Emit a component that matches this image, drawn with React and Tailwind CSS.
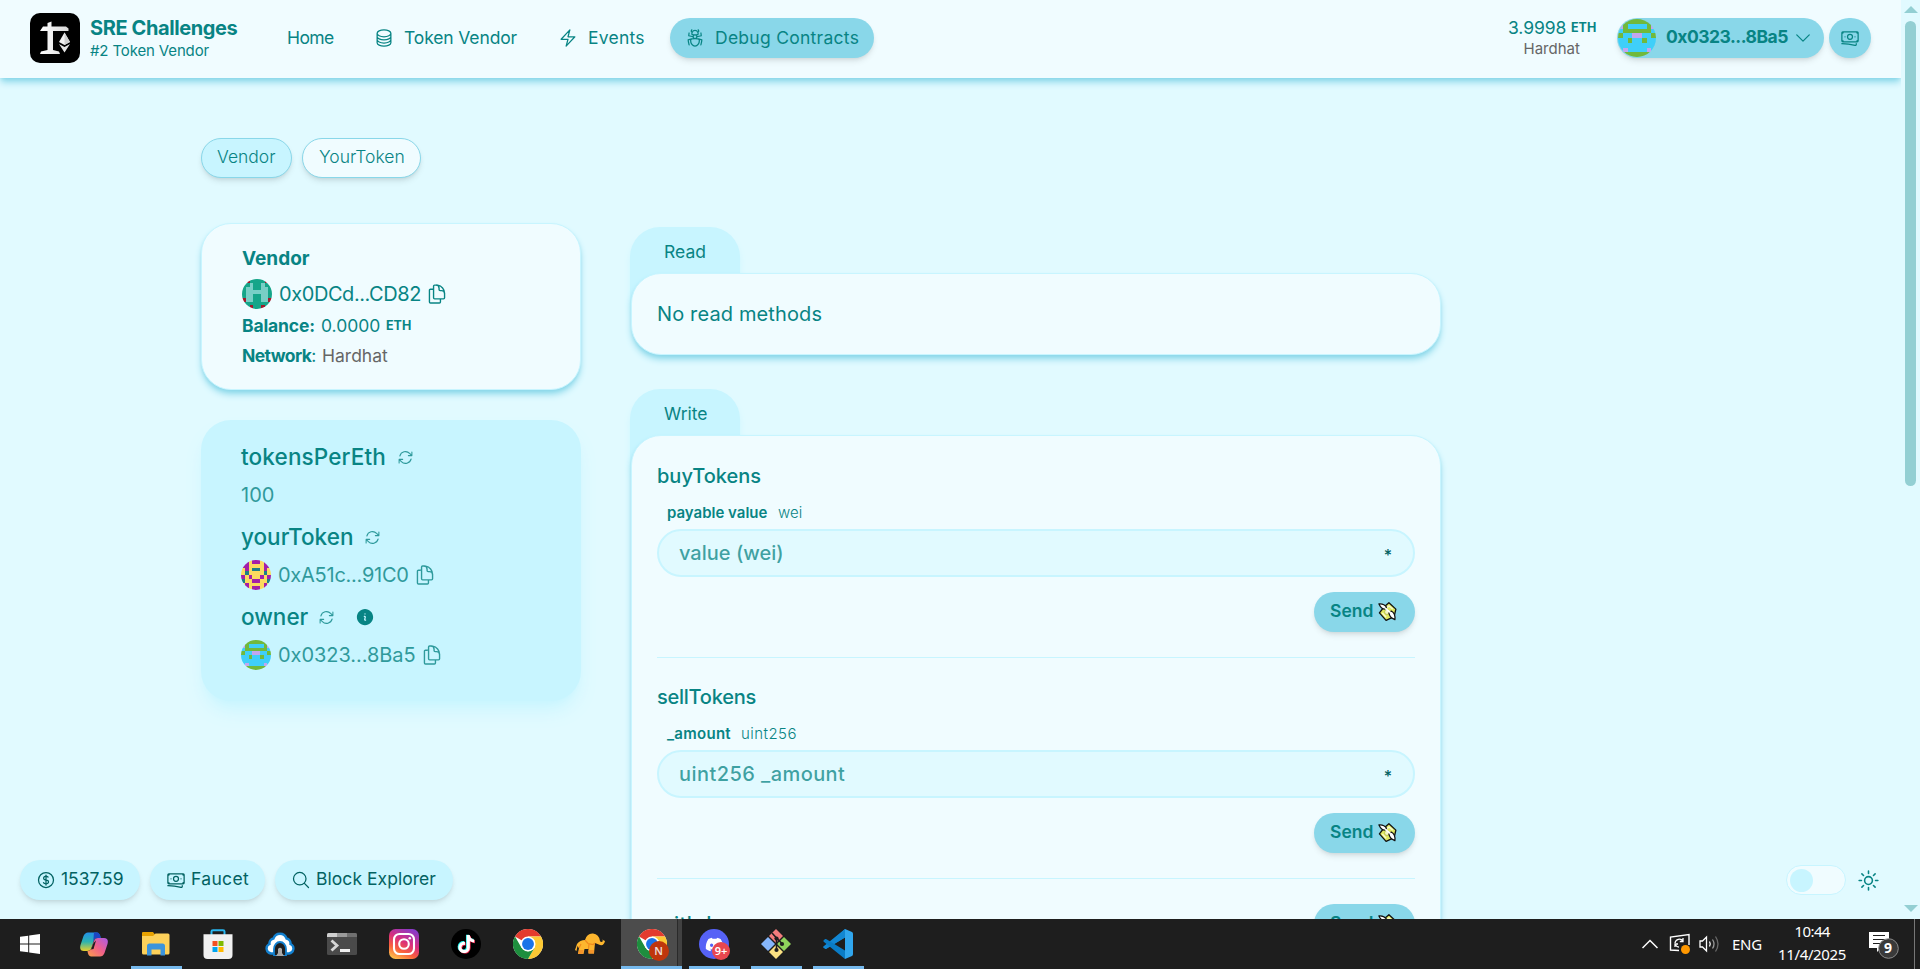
import React from "react";
import {
  HiOutlineCircleStack, HiOutlineBolt, HiOutlineBugAnt, HiOutlineBanknotes, HiOutlineChevronDown,
  HiOutlineDocumentDuplicate, HiOutlineArrowPath, HiInformationCircle, HiOutlineCurrencyDollar,
  HiOutlineMagnifyingGlass, HiOutlineSun,
} from "react-icons/hi2";
import { FaDiscord, FaTiktok } from "react-icons/fa6";

const T = ({ className, children }) => (
  <span className={"block shrink-0 whitespace-nowrap " + className}>{children}</span>
);

const OWNER = {
  colors: { g: "#71b93c", b: "#3fcff9", p: "#c3a6ee" },
  rows: ["gggg", "pgbb", "bggg", "gbbp", "bbgb", "bbbb", "bpbb", "gggg"],
};
const VENDOR = {
  colors: { t: "#15a589", l: "#78cfc6", r: "#a11b2c" },
  rows: ["trtt", "ttlt", "tllt", "tlll", "tllt", "rllt", "tttt", "ttrt"],
};
const TOKEN = {
  colors: { y: "#fbda5f", p: "#a31fa8", t: "#1b7f88" },
  rows: ["ypyp", "ppyy", "ypyt", "ytyy", "pypy", "tyyp", "ypyy", "ppyp"],
};

function Blockie({ data, className }) {
  return (
    <svg viewBox="0 0 8 8" shapeRendering="crispEdges" className={"block shrink-0 rounded-full " + className}>
      {data.rows.map((row, y) =>
        [0, 1, 2, 3, 4, 5, 6, 7].map((x) => (
          <rect key={x + "-" + y} x={x} y={y} width="1" height="1" fill={data.colors[row[x < 4 ? x : 7 - x]]} />
        ))
      )}
    </svg>
  );
}

function Logo() {
  return (
    <svg viewBox="0 0 50 50" className="block size-[50px] shrink-0">
      <defs>
        <linearGradient id="crane" x1="0" y1="0" x2="1" y2="0">
          <stop offset="0" stopColor="#fff" /><stop offset="1" stopColor="#d8d8d8" />
        </linearGradient>
      </defs>
      <rect width="50" height="50" rx="10" fill="#000" />
      <path d="M10 18 L13 13.5 H17.5 V10 L21.5 8.5 V13.5 H36 L38.5 15.5 V18 H23 V37 L29 38.5 L30 41 H10 L11 38.5 L17.5 37 V18 Z" fill="url(#crane)" />
      <path d="M34.5 19.5 L40 29 L34.5 32 L29 29 Z" fill="#f2f2f2" />
      <path d="M34.5 19.5 L40 29 L34.5 32 Z" fill="#cfcfcf" />
      <path d="M29 31 L34.5 34 L40 31 L34.5 39.5 Z" fill="#e4e4e4" />
    </svg>
  );
}

function MoneyWings() {
  return (
    <svg viewBox="0 0 20 20" className="block size-[19px] shrink-0">
      <path d="M11.500 .8 L18.800 7.500 L17 15.500 L8.500 19.300 L1.500 11.500 L6.500 5 Z" fill="#dfe860" stroke="#111" strokeWidth="1.400" strokeLinejoin="round" />
      <path d="M11.500 4 L15.500 7.500 M4.500 11.500 L8.500 16 M8.500 6.500 L12 4" stroke="#f9fad0" strokeWidth="1.500" />
      <circle cx="9.500" cy="10.500" r="2.600" fill="#f5f7c4" stroke="#a9b03a" strokeWidth=".7" />
      <path d="M1 2 Q6.500 1.500 9 5.500 L7.500 7.500 Q3.500 7.500 1 2 Z M11.500 11.500 L14 9.500 Q18.500 12 17.800 18.500 L15.800 17.500 Q12.500 16.500 11.500 11.500Z" fill="#fff" stroke="#111" strokeWidth="1.300" strokeLinejoin="round" />
      <path d="M7.500 6.500 L13.500 11.500" stroke="#fff" strokeWidth="1.800" />
    </svg>
  );
}

function Header() {
  return (
    <header className="relative z-20 flex h-[78px] shrink-0 items-center bg-[#f0fcff] pl-[30px] pr-[30px] pb-[2px] shadow-[0_5px_7px_-1px_#89d7e9,0_2px_4px_-2px_#89d7e9]">
      <Logo />
      <div className="ml-[10px] flex w-[148px] flex-col">
        <T className="w-[147px] text-[20px] font-bold leading-[25px] tracking-[-0.4px]">SRE Challenges</T>
        <T className="w-[119px] text-[15px] leading-[20px] tracking-[-0.14px]">#2 Token Vendor</T>
      </div>
      <nav className="ml-[29px] flex h-10 items-center text-[17.5px]">
        <div className="flex items-center px-[20px]"><T className="w-[46px] tracking-[-0.6px]">Home</T></div>
        <div className="flex items-center gap-[10px] px-[21px]">
          <HiOutlineCircleStack className="size-[20px]" /><T className="w-[113px] tracking-[-0.13px]">Token Vendor</T>
        </div>
        <div className="flex items-center gap-[10px] px-[20px]">
          <HiOutlineBolt className="size-[20px]" /><T className="w-[57px] tracking-[0.25px]">Events</T>
        </div>
        <div className="ml-[5px] flex h-10 w-[204px] items-center gap-[10px] rounded-full bg-[#89d7e9] pl-[15px] shadow-md">
          <HiOutlineBugAnt className="size-[20px]" /><T className="w-[144px] tracking-[0.27px]">Debug Contracts</T>
        </div>
      </nav>
      <div className="ml-auto mr-[21px] flex flex-col items-center">
        <div className="flex h-[22px] items-center gap-[5px]">
          <T className="w-[58px] text-[17.5px] tracking-[-0.1px]">3.9998</T>
          <T className="w-[25px] text-[12.5px] font-bold">ETH</T>
        </div>
        <T className="w-[57px] text-[15px] leading-[20px] text-[#666]">Hardhat</T>
      </div>
      <div className="flex h-10 w-[207px] items-center rounded-full bg-[#89d7e9] pl-px shadow-md">
        <Blockie data={OWNER} className="size-[38px]" />
        <T className="ml-[10px] w-[122px] pb-[2px] text-[17.5px] font-bold tracking-[-0.5px]">0x0323...8Ba5</T>
        <HiOutlineChevronDown className="ml-[5px] size-[20px]" />
      </div>
      <div className="ml-[5px] flex h-10 w-[42px] items-center justify-center rounded-full bg-[#89d7e9] shadow-md">
        <HiOutlineBanknotes className="size-[20px]" />
      </div>
    </header>
  );
}

const panel = "relative border border-[#c8f5ff] bg-[#f0fcff] rounded-[30px] shadow-[0_5px_7px_-1px_#89d7e9,0_2px_4px_-2px_#89d7e9] ";

function LeftColumn() {
  return (
    <div className="flex w-[380px] shrink-0 flex-col">
      <div className={panel + "h-[167px] pl-[40px] pt-[22px]"}>
        <T className="w-[67px] text-[19px] font-bold leading-[25px]">Vendor</T>
        <div className="mt-[8px] flex h-[30px] items-center">
          <Blockie data={VENDOR} className="size-[30px]" />
          <T className="ml-[7px] w-[142px] text-[20px] tracking-[-0.42px]">0x0DCd...CD82</T>
          <HiOutlineDocumentDuplicate className="ml-[5px] size-[22px]" />
        </div>
        <div className="mt-[2px] flex h-[30px] items-center text-[17.5px]">
          <T className="w-[73px] font-bold tracking-[-0.15px]">Balance:</T>
          <T className="ml-[6px] w-[59px]">0.0000</T>
          <T className="ml-[6px] w-[25px] text-[12.5px] font-bold">ETH</T>
        </div>
        <div className="flex h-[30px] items-center text-[17.5px]">
          <T className="w-[74px] tracking-[-0.6px]"><b className="font-bold">Network</b>:</T>
          <T className="ml-[6px] w-[66px] text-[#666]">Hardhat</T>
        </div>
      </div>
      <div className="mt-[30px] h-[281px] rounded-[30px] bg-[#c8f5ff] pl-[40px] pt-[22px] shadow-[0_12px_19px_-4px_#c8f5ff,0_5px_7px_-5px_#c8f5ff]">
        <div className="flex h-[30px] items-center">
          <T className="w-[145px] text-[22.5px] font-medium tracking-[0.14px]">tokensPerEth</T>
          <HiOutlineArrowPath className="ml-[11px] size-[17px] opacity-80" />
        </div>
        <div className="mt-[8px] flex h-[30px] items-center opacity-80">
          <T className="w-[33px] text-[20px]">100</T>
        </div>
        <div className="mt-[12px] flex h-[30px] items-center">
          <T className="w-[113px] text-[22.5px] font-medium">yourToken</T>
          <HiOutlineArrowPath className="ml-[10px] size-[17px] opacity-80" />
        </div>
        <div className="mt-[8px] flex h-[30px] items-center">
          <Blockie data={TOKEN} className="size-[30px]" />
          <T className="ml-[7px] w-[131px] text-[20px] tracking-[-0.25px] opacity-80">0xA51c...91C0</T>
          <HiOutlineDocumentDuplicate className="ml-[5px] size-[22px] opacity-80" />
        </div>
        <div className="mt-[12px] flex h-[30px] items-center">
          <T className="w-[67px] text-[22.5px] font-medium">owner</T>
          <HiOutlineArrowPath className="ml-[10px] size-[17px] opacity-80" />
          <HiInformationCircle className="ml-[20px] size-[20px]" />
        </div>
        <div className="mt-[8px] flex h-[30px] items-center">
          <Blockie data={OWNER} className="size-[30px]" />
          <T className="ml-[7px] w-[138px] text-[20px] tracking-[-0.05px] opacity-80">0x0323...8Ba5</T>
          <HiOutlineDocumentDuplicate className="ml-[5px] size-[22px] opacity-80" />
        </div>
      </div>
    </div>
  );
}

const SendButton = () => (
  <div className="flex h-10 w-[101px] shrink-0 items-center rounded-full bg-[#89d7e9] pl-[16px] shadow-md">
    <T className="w-[43px] pb-[2px] text-[17.5px] font-semibold">Send</T>
    <span className="ml-[5px] pb-px"><MoneyWings /></span>
  </div>
);

function Method({ className, title, label, type, placeholder }) {
  return (
    <div className={"flex flex-col border-b border-[#c8f5ff] pb-[25px] " + className}>
      <div className="flex h-[30px] items-center text-[20px] font-medium">{title}</div>
      <div className="mt-[12px] flex h-[20px] items-center gap-[10px] pl-[10px] text-[15px]">{label}{type}</div>
      <div className="mt-[6px] flex h-[48px] items-center justify-between rounded-full border-2 border-[#c8f5ff] bg-[#e1faff] pl-[20px] pr-[20px] text-[20px] font-medium">
        {placeholder}
        <span className="h-[18px] w-[10px] text-center text-[16px] leading-[22px] text-[#026262]">*</span>
      </div>
      <div className="mt-[15px] flex justify-end"><SendButton /></div>
    </div>
  );
}

function Tab({ children }) {
  return (
    <div className="-mb-[54px] -ml-px h-[100px] w-[110px] rounded-[30px] bg-[#c8f5ff] text-[17.5px] shadow-[0_5px_7px_-1px_#c8f5ff]">
      <div className="flex h-[50px] items-center pl-[34px]">{children}</div>
    </div>
  );
}

function RightColumn() {
  return (
    <div className="ml-[50px] flex w-[810px] shrink-0 flex-col pt-[4px]">
      <Tab><T className="w-[42px]">Read</T></Tab>
      <div className={panel + "flex h-[82px] items-center pl-[25px]"}>
        <T className="w-[165px] text-[20px] tracking-[0.13px]">No read methods</T>
      </div>
      <div className="h-[34px]" />
      <Tab><T className="w-[44px]">Write</T></Tab>
      <div className={panel + "h-[700px] px-[25px]"}>
        <Method
          className="pt-[25px]"
          title={<T className="w-[104px]">buyTokens</T>}
          label={<T className="w-[101px] font-semibold">payable value</T>}
          type={<T className="w-[24px] font-light">wei</T>}
          placeholder={<T className="w-[104px] text-[#088484]/75">value (wei)</T>}
        />
        <Method
          className="pt-[24px]"
          title={<T className="w-[99px] tracking-[-0.25px]">sellTokens</T>}
          label={<T className="w-[64px] font-semibold tracking-[0.28px]">_amount</T>}
          type={<T className="w-[56px] font-light tracking-[0.45px]">uint256</T>}
          placeholder={<T className="w-[166px] tracking-[0.43px] text-[#088484]/75">uint256 _amount</T>}
        />
        <div className="flex items-center justify-between pt-[25px]">
          <T className="w-[92px] text-[20px] font-medium tracking-[0.4px]">withdraw</T>
          <SendButton />
        </div>
      </div>
    </div>
  );
}

function Floating() {
  const pill = "flex h-10 items-center rounded-full bg-[#c8f5ff] text-[17.5px] text-[#026262] shadow-md ";
  return (
    <>
      <div className="absolute left-[20px] top-[860px] z-20 flex gap-[10px]">
        <div className={pill + "w-[120px] gap-[5px] pl-[16px]"}>
          <HiOutlineCurrencyDollar className="size-[20px]" /><T className="w-[63px] pb-[2px]">1537.59</T>
        </div>
        <div className={pill + "w-[115px] gap-[5px] pl-[16px]"}>
          <HiOutlineBanknotes className="size-[20px]" /><T className="w-[58px] pb-[2px] tracking-[0.33px]">Faucet</T>
        </div>
        <div className={pill + "w-[178px] gap-[5px] pl-[16px]"}>
          <HiOutlineMagnifyingGlass className="size-[20px]" /><T className="w-[120px] pb-[2px] tracking-[0.05px]">Block Explorer</T>
        </div>
      </div>
      <div className="absolute left-[1786px] top-[865px] z-20 flex items-center gap-[10px]">
        <div className="flex h-[30px] w-[60px] items-center rounded-full border border-[#c8f5ff] bg-[#f0fcff] pl-[3px]">
          <div className="size-[23px] rounded-full bg-[#c8f5ff]" />
        </div>
        <HiOutlineSun className="size-[25px]" />
      </div>
    </>
  );
}

function Scrollbar() {
  return (
    <div className="flex h-full w-[19px] shrink-0 flex-col items-center bg-[#e1faff] pt-[6px] pb-[7px]">
      <svg viewBox="0 0 14 7" className="h-[7px] w-[14px]"><path d="M7 0 L14 7 H0Z" fill="#93cfd3" /></svg>
      <div className="mt-[8px] h-[465px] w-[11px] rounded-full bg-[#93cfd3]" />
      <svg viewBox="0 0 14 7" className="mt-auto h-[7px] w-[14px]"><path d="M7 7 L14 0 H0Z" fill="#93cfd3" /></svg>
    </div>
  );
}

const Chrome = () => (
  <svg viewBox="0 0 48 48" className="size-[30px]">
    <circle cx="24" cy="24" r="24" fill="#fff" />
    <path d="M24 24 L3.200 12 A24 24 0 0 1 44.800 12 H24 Z" fill="#e33b2e" />
    <path d="M44.800 12 A24 24 0 0 1 24 48 L34.400 30 L34.400 18 L24 12 Z" fill="#fcc934" />
    <path d="M3.200 12 L13.600 30 L24 36 L34.400 30 L24 48 A24 24 0 0 1 3.200 12Z" fill="#1e8e3e" />
    <circle cx="24" cy="24" r="12" fill="#fff" /><circle cx="24" cy="24" r="9.500" fill="#1a73e8" />
  </svg>
);

function Cell({ className = "", bar, children }) {
  return (
    <div className={"relative flex h-[50px] w-[62px] shrink-0 items-center justify-center " + className}>
      {children}
      {bar && <div className="absolute bottom-0 left-[6px] h-[3px] w-[51px] bg-[#76b9ed]" />}
    </div>
  );
}

function Taskbar() {
  return (
    <div className="flex h-[50px] w-full shrink-0 items-center bg-[#1e1e1e] text-white">
      <Cell className="mr-px">
        <svg viewBox="0 0 20 20" className="mr-[2px] size-[20px]" fill="#fff">
          <path d="M0 2.800 L8.200 1.700 V9.500 H0Z M9.200 1.500 L20 0 V9.500 H9.200Z M0 10.500 H8.200 V18.300 L0 17.200Z M9.200 10.500 H20 V20 L9.200 18.500Z" />
        </svg>
      </Cell>
      <Cell>
        <svg viewBox="0 0 28 25" className="h-[25px] w-[28px]">
          <defs>
            <linearGradient id="cpa" x1="0" y1="0" x2="0" y2="1"><stop offset="0" stopColor="#2390e8" /><stop offset=".5" stopColor="#2bb3b0" /><stop offset="1" stopColor="#e9d02a" /></linearGradient>
            <linearGradient id="cpb" x1="1" y1="0" x2="0" y2="1"><stop offset="0" stopColor="#a85be8" /><stop offset=".5" stopColor="#f0608a" /><stop offset="1" stopColor="#fba04a" /></linearGradient>
          </defs>
          <path d="M8 0.500 H17 Q20 1 20.500 6 H17 Q14.500 6 13.700 9 L11.500 16 Q10.500 19 7 19 H4 Q-1 19 0.500 13 L3.500 4 Q5 .500 8 .500Z" fill="url(#cpa)" />
          <path d="M14 .500 H17.500 Q20 1 20.800 6 H17 Q14 6.500 13.200 10Z" fill="#1b46c4" />
          <path d="M20 24.500 H11 Q8 24 7.500 19 Q10.500 19 11.500 16 L14 9 Q15 6 18 6 H24 Q29 6 27.500 12 L24.500 21 Q23 24.500 20 24.500Z" fill="url(#cpb)" />
          <path d="M13.500 11 L16 8.500 L13.500 17 L11 17.500Z" fill="#1e1e1e" />
        </svg>
      </Cell>
      <Cell bar>
        <svg viewBox="0 0 28 24" className="h-[24px] w-[28px]">
          <path d="M0 1 Q0 0 1 0 H11 L13 2.500 L11 5 H0Z" fill="#e8a200" />
          <path d="M0 4 H11 L13.500 1.500 H26 Q27.500 1.500 27.500 3 V21 Q27.500 22.500 26 22.500 H1.500 Q0 22.500 0 21Z" fill="#fdd15a" />
          <path d="M5 14 Q5 11.500 7.500 11.500 H20.500 Q23 11.500 23 14 V23.500 H18.500 V17.500 H9.500 V23.500 H5Z" fill="#3c94dc" />
        </svg>
      </Cell>
      <Cell>
        <svg viewBox="0 0 30 30" className="size-[30px]">
          <path d="M8.500 6 V2.500 Q8.500 1.200 10 1.200 H20 Q21.500 1.200 21.500 2.500 V6" fill="none" stroke="#29b6f0" strokeWidth="2" />
          <path d="M.500 5.200 H29.500 V26 Q29.500 30 25.500 30 H4.500 Q.500 30 .500 26Z" fill="#f1f1f1" />
          <path d="M9.500 12 H14.500 V17 H9.500Z" fill="#f25022" /><path d="M15.500 12 H20.500 V17 H15.500Z" fill="#7fba00" />
          <path d="M9.500 18 H14.500 V23 H9.500Z" fill="#00a4ef" /><path d="M15.500 18 H20.500 V23 H15.500Z" fill="#ffb900" />
        </svg>
      </Cell>
      <Cell>
        <svg viewBox="0 0 30 24" className="h-[24px] w-[30px]">
          <path d="M6 21.500 A5 5 0 0 1 4.500 12 A5 5 0 0 1 8.500 6.500 A6.800 6.800 0 0 1 21.500 6.500 A5 5 0 0 1 25.500 12 A5 5 0 0 1 24 21.500Z" fill="#fff" stroke="#1380cf" strokeWidth="2.400" />
          <path d="M9 24 V17 A6 7 0 0 1 21 17 V24Z" fill="#1e1e1e" stroke="#1380cf" strokeWidth="1.800" />
          <path d="M11 24 L13 21 V17 Q15 14.500 17 17 V21 L19 24Z" fill="#a9a9a9" />
        </svg>
      </Cell>
      <Cell>
        <svg viewBox="0 0 30 22" className="h-[22px] w-[30px]">
          <rect width="30" height="22" rx="1.500" fill="#4a4a4a" /><path d="M0 4 V1.500 Q0 0 1.500 0 H10 V4Z" fill="#cfcfcf" /><path d="M10 0 H20 V4 H10Z" fill="#9a9a9a" /><path d="M20 0 H28.500 Q30 0 30 1.500 V4 H20Z" fill="#707070" />
          <path d="M4.500 7.500 L10 12.500 L4.500 17.500" fill="none" stroke="#d6d6d6" strokeWidth="2.800" /><path d="M13 16 H23 V19 H13Z" fill="#f0f0f0" />
        </svg>
      </Cell>
      <Cell>
        <svg viewBox="0 0 30 30" className="size-[30px]">
          <defs>
            <linearGradient id="ig" x1=".2" y1="1" x2=".7" y2="0"><stop offset="0" stopColor="#fdc04c" /><stop offset=".3" stopColor="#f9603c" /><stop offset=".6" stopColor="#d82d7e" /><stop offset="1" stopColor="#8a3ac8" /></linearGradient>
          </defs>
          <rect width="30" height="30" rx="6.500" fill="url(#ig)" />
          <g fill="none" stroke="#fff" strokeWidth="2.100"><rect x="5" y="5" width="20" height="20" rx="5.500" /><circle cx="15" cy="15" r="4.800" /></g><circle cx="20.800" cy="9.200" r="1.300" fill="#fff" />
        </svg>
      </Cell>
      <Cell>
        <svg viewBox="0 0 30 30" className="size-[30px]">
          <circle cx="15" cy="15" r="15" fill="#000" />
          <FaTiktok x="5.500" y="5.500" size="18" color="#25f4ee" /><FaTiktok x="7" y="6.800" size="18" color="#fe2c55" /><FaTiktok x="6.300" y="6.100" size="18" color="#fff" />
        </svg>
      </Cell>
      <Cell><Chrome /></Cell>
      <Cell>
        <svg viewBox="0 0 30 24" className="h-[24px] w-[30px]">
          <path d="M2 12 Q5 8 10 8 Q12 1 18 1.500 Q24 2 25 9 Q26 11 28 9 L27 7.500 L30 9 Q29 14 25 13 L20 11 L19 21.500 H13.500 V17 H9.500 L8.500 22 H3 L4 16 L2.500 14 L1.500 19 L0 18Z" fill="#fdb62e" />
          <path d="M10 8 L13 11.500 L18 12.500 L20 11 M13.500 17 L14 12 M4 16 L6 12" stroke="#f08a1c" strokeWidth="1.200" fill="none" />
          <path d="M3 22 L4 18 H8.800 L8 22Z M13.500 21.500 V18 H19 V21.500Z" fill="#f5952a" />
        </svg>
      </Cell>
      <div className="relative flex h-[50px] w-[61px] shrink-0 items-center justify-center border-b-[3px] border-[#76b9ed] bg-[#4c4c4c] pt-[3px]">
        <div className="relative"><Chrome />
          <div className="absolute left-[12px] top-[12px] flex size-[20px] items-center justify-center rounded-full bg-[#bf360c] font-['Noto_Sans',sans-serif] text-[11px] font-semibold text-[#ecdcd6]">N</div>
        </div>
        <div className="absolute right-0 top-0 h-[47px] w-[5px] border-l border-[#2a2a2a] bg-[#414141]" />
      </div>
      <Cell bar className="ml-px">
        <div className="relative flex size-[30px] items-center justify-center rounded-full bg-[#5662f6]">
          <FaDiscord className="size-[19px]" />
          <div className="absolute left-[13px] top-[13px] flex size-[18px] items-center justify-center rounded-full bg-[#e8474f] font-['Noto_Sans',sans-serif] text-[11px] font-semibold">9+</div>
        </div>
      </Cell>
      <Cell bar>
        <svg viewBox="0 0 30 30" className="size-[30px]">
          <path d="M15 0 L22 7 L15 14 L8 7Z" fill="#f37c7c" /><path d="M7 8 L14 15 L7 22 L0 15Z" fill="#86b6fb" />
          <path d="M23 8 L30 15 L23 22 L16 15Z" fill="#8fd35c" /><path d="M15 16 L22 23 L15 30 L8 23Z" fill="#fbe182" />
          <path d="M11 4 L15.500 9 V21 M15.500 9 L21.500 15" stroke="#1e1e1e" strokeWidth="1.600" fill="none" />
          <circle cx="15.500" cy="9.500" r="2.100" fill="#1e1e1e" /><circle cx="15.500" cy="21" r="2.100" fill="#1e1e1e" /><circle cx="21" cy="15" r="2.100" fill="#1e1e1e" />
        </svg>
      </Cell>
      <Cell bar>
        <svg viewBox="0 0 30 30" className="size-[30px]">
          <path d="M22 0 L.800 19 Q0 18 .500 17.300 L2.500 20 L22 8.500Z" fill="#1287d3" />
          <path d="M22 0 L.700 17.200 Q0 18 .700 18.700 L2.200 20 Q2.800 20.300 3.500 19.800 L22 8.500Z" fill="#1287d3" />
          <path d="M22 30 L.700 12.800 Q0 12 .700 11.300 L2.200 10 Q2.800 9.700 3.500 10.200 L22 21.500Z" fill="#0a7cc6" />
          <path d="M22 0 L29 3 Q30 3.500 30 5 V25 Q30 26.500 29 27 L22 30Z" fill="#30a6ee" />
        </svg>
      </Cell>
      <div className="ml-auto flex h-[50px] items-center font-['Noto_Sans',sans-serif] text-[15px]">
        <svg viewBox="0 0 16 10" className="h-[10px] w-[16px]"><path d="M.500 9 L8 1.500 L15.500 9" fill="none" stroke="#fff" strokeWidth="1.500" /></svg>
        <svg viewBox="0 0 22 22" className="ml-[11px] size-[22px]">
          <path d="M10 17.500 L1.500 17 V4 L20 1.500 V12" fill="none" stroke="#fff" strokeWidth="1.400" />
          <path d="M6 10 A4.500 4.500 0 0 1 14 8 M14 5 V8.500 H10.800 M6 14 V11 H9 M6.500 12 A4.500 4.500 0 0 0 10 14.200" fill="none" stroke="#fff" strokeWidth="1.300" />
          <circle cx="16.500" cy="16.500" r="4.500" fill="#ff9800" />
        </svg>
        <svg viewBox="0 0 21 18" className="ml-[8px] h-[18px] w-[21px]" fill="none" strokeWidth="1.300">
          <path d="M1 6 H3.500 L7.500 2 V16 L3.500 12 H1Z" stroke="#fff" /><path d="M10.500 6.500 Q12 9 10.500 11.500" stroke="#fff" />
          <path d="M13.500 4.500 Q16.500 9 13.500 13.500" stroke="#9a9a9a" /><path d="M16.500 1.500 Q21.500 9 16.500 16.500" stroke="#6a6a6a" />
        </svg>
        <T className="ml-[12px] w-[30px] tracking-[-0.3px]">ENG</T>
        <div className="ml-[16px] flex w-[68px] flex-col items-center pb-[2px]">
          <T className="w-[35px] leading-[23px] tracking-[-0.6px]">10:44</T><T className="w-[68px] leading-[23px] tracking-[-0.36px]">11/4/2025</T>
        </div>
        <div className="relative ml-[23px] h-[30px] w-[30px]">
          <svg viewBox="0 0 30 30" className="size-[30px]">
            <path d="M0 3 H20 V19 H12 L8 23 V19 H0Z" fill="#fff" />
            <path d="M4 6.500 H16 M4 10.500 H16 M4 14.500 H13" stroke="#1e1e1e" strokeWidth="1.200" />
            <circle cx="19.500" cy="19.500" r="9.800" fill="#3a3a3a" stroke="#8c8c8c" strokeWidth="1" />
          </svg>
          <span className="absolute left-[15px] top-[9px] text-[14px] font-bold leading-[20px]">9</span>
        </div>
        <div className="ml-[15px] mr-[5px] h-[50px] w-px bg-[#777]" />
      </div>
    </div>
  );
}

export default function App() {
  return (
    <div className="flex h-[969px] w-[1920px] flex-col overflow-hidden bg-[#e1faff] font-['Inter',sans-serif] leading-normal text-[#088484]">
      <div className="relative flex h-[919px] shrink-0 overflow-hidden">
        <div className="flex h-full w-[1901px] flex-col overflow-hidden">
          <Header />
          <main className="flex flex-col pl-[201px] pt-[60px]">
            <div className="flex gap-[10px] text-[17.5px] font-light">
              <div className="flex h-10 w-[91px] items-center rounded-full border border-[#89d7e9] bg-[#c8f5ff] pl-[15px] shadow-md"><T className="w-[59px] pb-[2px]">Vendor</T></div>
              <div className="flex h-10 w-[119px] items-center rounded-full border border-[#89d7e9] bg-[#f0fcff] pl-[16px] shadow-md"><T className="w-[86px] pb-[2px]">YourToken</T></div>
            </div>
            <div className="mt-[45px] flex items-start">
              <LeftColumn />
              <RightColumn />
            </div>
          </main>
        </div>
        <Scrollbar />
        <Floating />
      </div>
      <Taskbar />
    </div>
  );
}
